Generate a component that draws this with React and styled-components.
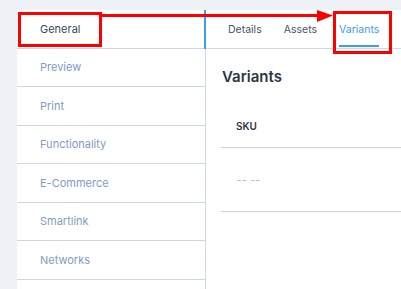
import React from 'react';
import styled, { createGlobalStyle } from 'styled-components';

const GlobalStyle = createGlobalStyle`
  html, body {
    margin: 0;
    padding: 0;
    background: #eef2f6;
    font-family: Inter, "Noto Sans", "Liberation Sans", sans-serif;
  }
  * { box-sizing: border-box; }
`;

const Page = styled.div`
  position: relative;
  width: 401px;
  height: 289px;
  overflow: hidden;
  padding: 10px 0 0 17px;
`;

const Layout = styled.div`
  display: flex;
  height: 100%;
  background: #fff;
`;

const Sidebar = styled.nav`
  width: 189px;
  flex-shrink: 0;
  border-right: 1px solid #cfd8e3;
  display: flex;
  flex-direction: column;
`;

const NavItem = styled.div`
  position: relative;
  height: 38.5px;
  flex-shrink: 0;
  display: flex;
  align-items: center;
  padding-left: 23px;
  border-bottom: 1px solid #cdd6e2;
  font-size: 11px;
  color: ${p => (p.$active ? '#3b475a' : '#7f9bc8')};

  ${p => p.$active && `
    &::after {
      content: '';
      position: absolute;
      right: -1px;
      top: 0;
      bottom: -1px;
      width: 2px;
      background: #3d9cf0;
    }
  `}
`;

const Main = styled.main`
  flex: 1;
  display: flex;
  flex-direction: column;
`;

const Tabs = styled.div`
  height: 39px;
  display: flex;
  padding-left: 11px;
  border-bottom: 1px solid #cfd8e3;
`;

const Tab = styled.div`
  position: relative;
  display: flex;
  align-items: center;
  padding: 0 11px;
  font-size: 10.5px;
  color: ${p => (p.$active ? '#3d9cf0' : '#4a5566')};
`;

const Underline = styled.span`
  position: absolute;
  left: 11px;
  right: 11px;
  bottom: 1px;
  height: 2px;
  background: #3d9cf0;
`;

const Content = styled.div`
  padding: 18px 0 0 15px;
`;

const Heading = styled.h2`
  margin: 0 0 0 1px;
  font-size: 15px;
  font-weight: 600;
  color: #2e3646;
  line-height: 20px;
`;

const Table = styled.div`
  margin-top: 17px;
`;

const HeaderRow = styled.div`
  height: 44px;
  display: flex;
  align-items: center;
  padding-left: 15px;
  border-bottom: 1px solid #c8d3e0;
  font-size: 10px;
  font-weight: 600;
  color: #2b3444;
`;

const BodyRow = styled.div`
  height: 64px;
  display: flex;
  align-items: center;
  padding-left: 16px;
  border-bottom: 1px solid #c8d3e0;
  font-size: 10px;
  color: #a9b1bd;
  letter-spacing: 0.5px;
`;

const Annotation = styled.div`
  position: absolute;
  border: 3px solid #ff0000;
  left: ${p => p.$x}px;
  top: ${p => p.$y}px;
  width: ${p => p.$w}px;
  height: ${p => p.$h}px;
`;

const ArrowSvg = styled.svg`
  position: absolute;
  left: 0;
  top: 0;
  pointer-events: none;
`;

const navItems = ['General', 'Preview', 'Print', 'Functionality', 'E-Commerce', 'Smartlink', 'Networks', ''];
const tabs = ['Details', 'Assets', 'Variants'];

export default function App() {
  return (
    <>
      <GlobalStyle />
      <Page>
        <Layout>
          <Sidebar>
            {navItems.map((item, i) => (
              <NavItem key={i} $active={i === 0}>{item}</NavItem>
            ))}
          </Sidebar>
          <Main>
            <Tabs>
              {tabs.map(t => (
                <Tab key={t} $active={t === 'Variants'}>
                  {t}
                  {t === 'Variants' && <Underline />}
                </Tab>
              ))}
            </Tabs>
            <Content>
              <Heading>Variants</Heading>
              <Table>
                <HeaderRow>SKU</HeaderRow>
                <BodyRow>-- --</BodyRow>
              </Table>
            </Content>
          </Main>
        </Layout>

        <Annotation $x={18} $y={12} $w={84} $h={35} />
        <Annotation $x={333} $y={11} $w={59} $h={43} />
        <ArrowSvg width="401" height="40" viewBox="0 0 401 40">
          <rect x="100" y="14" width="220" height="3" fill="#ff0000" />
          <polygon points="317,10 333,15.5 317,22" fill="#ff0000" />
        </ArrowSvg>
      </Page>
    </>
  );
}
